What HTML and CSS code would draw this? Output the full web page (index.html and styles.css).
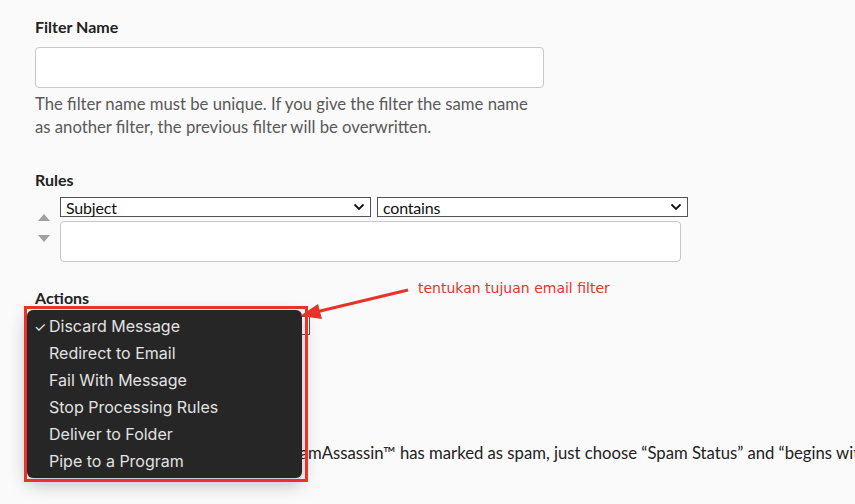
FILE: index.html
```html
<!DOCTYPE html>
<html>
<head>
<meta charset="utf-8">
<link rel="stylesheet" href="styles.css">
</head>
<body>
<div class="page">
  <section class="field">
    <label class="label">Filter Name</label>
    <input class="text-input" type="text">
    <p class="help">The filter name must be unique. If you give the filter the same name<br>as another filter, the previous filter will be overwritten.</p>
  </section>

  <section class="rules">
    <div class="label">Rules</div>
    <div class="rule-row">
      <div class="movers">
        <span class="tri up"></span>
        <span class="tri down"></span>
      </div>
      <div class="rule-body">
        <div class="selects">
          <div class="sel sel-a"><span>Subject</span><svg width="12" height="8" viewBox="0 0 12 8"><path d="M1.5 1.5 L6 6 L10.5 1.5" fill="none" stroke="#111" stroke-width="1.8"/></svg></div>
          <div class="sel sel-b"><span>contains</span><svg width="12" height="8" viewBox="0 0 12 8"><path d="M1.5 1.5 L6 6 L10.5 1.5" fill="none" stroke="#111" stroke-width="1.8"/></svg></div>
        </div>
        <div class="rule-input"></div>
      </div>
    </div>
  </section>

  <section class="actions">
    <div class="label">Actions</div>
    <div class="action-sel"></div>
    <p class="spam-help"><span class="lead">To filter all mail that Apache Spa</span>mAssassin™ has marked as spam, just choose “Spam Status” and “begins with”.</p>
  </section>
</div>

<div class="menu">
  <div class="item"><span class="check">✓</span>Discard Message</div>
  <div class="item">Redirect to Email</div>
  <div class="item">Fail With Message</div>
  <div class="item">Stop Processing Rules</div>
  <div class="item">Deliver to Folder</div>
  <div class="item">Pipe to a Program</div>
</div>
<div class="red-box"></div>
<svg class="arrow" width="120" height="40" viewBox="0 0 120 40">
  <line x1="112" y1="6" x2="20" y2="28" stroke="#e8322a" stroke-width="3"/>
  <polygon points="4,32 22,20 26,35" fill="#e8322a"/>
</svg>
<div class="note">tentukan tujuan email filter</div>
</body>
</html>
```
FILE: styles.css
```css
html, body {
  margin: 0;
  padding: 0;
  background: #fafafa;
  font-family: Lato, "Open Sans", sans-serif;
  color: #333;
  overflow: hidden;
  height: 504px;
}
.page {
  padding: 17px 0 0 35px;
}
.label {
  display: block;
  font-weight: 700;
  font-size: 16px;
  line-height: 20px;
  color: #222;
}
.field .label {
  margin-bottom: 10px;
}
.text-input {
  display: block;
  box-sizing: border-box;
  width: 509px;
  height: 41px;
  border: 1px solid #c8c8c8;
  border-radius: 4px;
  background: #fff;
  margin: 0;
}
.help {
  margin: 5px 0 0;
  font-size: 16.7px;
  line-height: 23px;
  color: #595959;
}
.rules {
  margin-top: 31px;
}
.rule-row {
  display: flex;
  margin-top: 7px;
}
.movers {
  width: 25px;
  display: flex;
  flex-direction: column;
  align-items: flex-start;
  padding-top: 17px;
  gap: 14px;
}
.tri {
  display: block;
  width: 0;
  height: 0;
  margin-left: 3px;
  border-left: 6px solid transparent;
  border-right: 6px solid transparent;
}
.tri.up { border-bottom: 7px solid #a0a0a0; }
.tri.down { border-top: 7px solid #a0a0a0; }
.rule-body {
  display: flex;
  flex-direction: column;
  gap: 4px;
}
.selects {
  display: flex;
  gap: 6px;
}
.sel {
  box-sizing: border-box;
  height: 20px;
  border: 1px solid #555;
  background: #fff;
  display: flex;
  align-items: center;
  justify-content: space-between;
  padding: 0 5px 0 5px;
  font-size: 16px;
  color: #111;
  letter-spacing: -0.2px;
}
.sel-a { width: 311px; }
.sel-b { width: 311px; }
.rule-input {
  box-sizing: border-box;
  width: 621px;
  height: 41px;
  border: 1px solid #c8c8c8;
  border-radius: 4px;
  background: #fff;
}
.actions {
  margin-top: 26px;
}
.action-sel {
  box-sizing: border-box;
  width: 275px;
  height: 19px;
  border: 1px solid #555;
  background: #fff;
  margin-top: 8px;
}
.spam-help {
  margin: 107px 0 0;
  font-size: 16.7px;
  line-height: 22px;
  white-space: nowrap;
  color: #222;
}
.lead {
  display: inline-block;
  width: 273px;
  overflow: hidden;
  vertical-align: top;
  text-align: right;
  direction: rtl;
}
.menu {
  position: absolute;
  left: 27px;
  top: 310px;
  width: 275px;
  box-sizing: border-box;
  padding: 3px 0;
  background: #262626;
  border-radius: 6px;
  box-shadow: 0 6px 18px rgba(0,0,0,0.25);
  font-family: Inter, "Open Sans", sans-serif;
  font-size: 16px;
  color: #e2e2e2;
}
.item {
  position: relative;
  height: 27px;
  line-height: 27px;
  padding-left: 22px;
}
.check {
  position: absolute;
  left: 7px;
  font-size: 14px;
}
.red-box {
  position: absolute;
  left: 24px;
  top: 306px;
  width: 278px;
  height: 170px;
  border: 3px solid #e8322a;
}
.arrow {
  position: absolute;
  left: 296px;
  top: 284px;
}
.note {
  position: absolute;
  left: 418px;
  top: 280px;
  font-family: "DejaVu Sans", Verdana, sans-serif;
  font-size: 14px;
  color: #e8322a;
}
```
